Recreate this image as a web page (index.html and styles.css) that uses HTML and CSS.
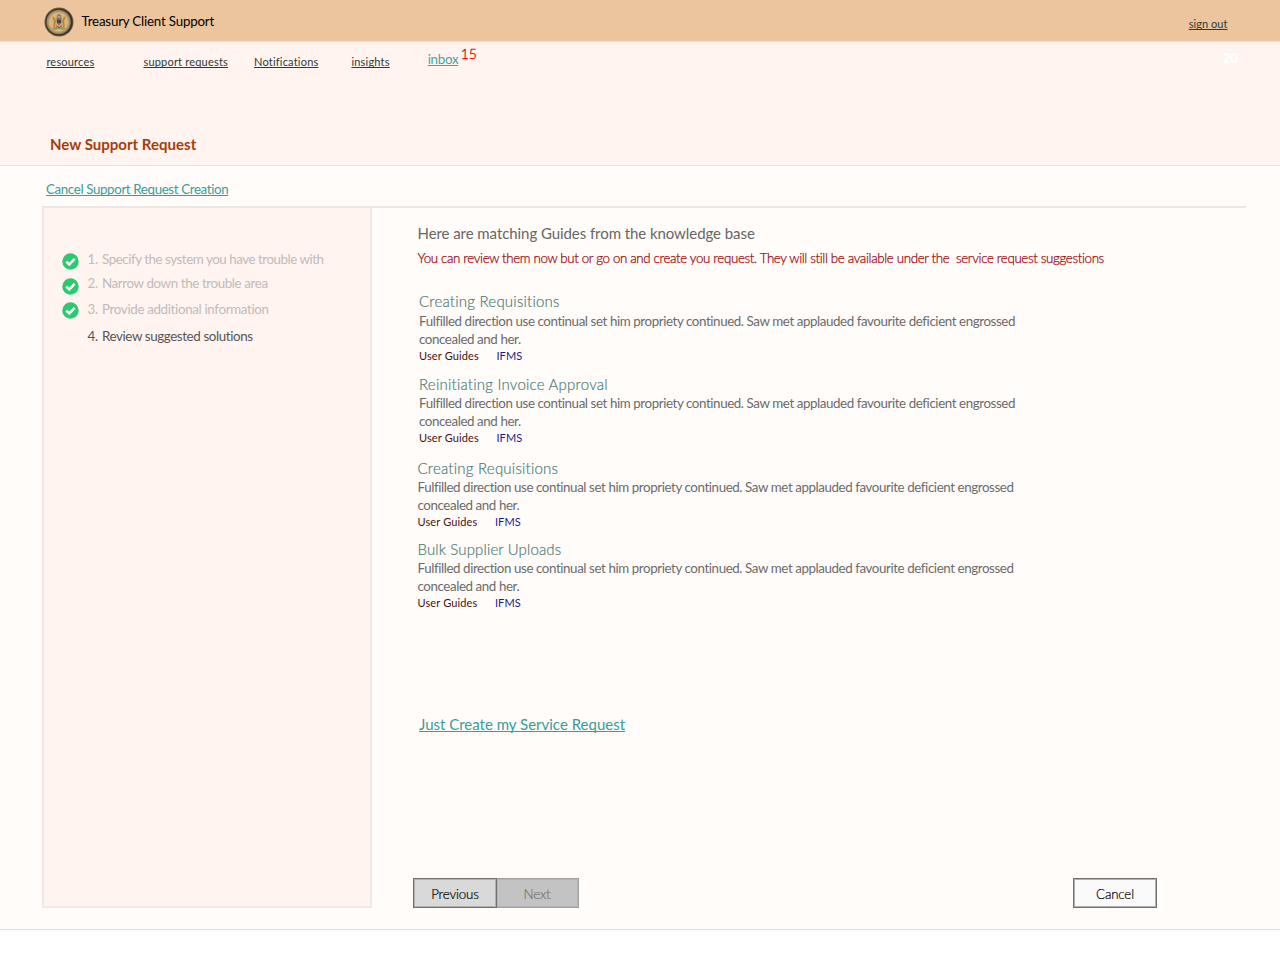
FILE: index.html
```html
<!DOCTYPE html>
<html lang="en">
<head>
<meta charset="utf-8">
<title>Treasury Client Support</title>
<link rel="stylesheet" href="styles.css">
</head>
<body>
<header class="topbar">
  <div class="brand">
    <svg class="seal" viewBox="0 0 30 30" width="30" height="30">
      <defs><radialGradient id="gold"><stop offset="0" stop-color="#c99e62"/><stop offset=".7" stop-color="#e0b87c"/><stop offset="1" stop-color="#8b7552"/></radialGradient></defs>
      <circle cx="15" cy="15" r="14.5" fill="#6b5d4e"/>
      <circle cx="15" cy="15" r="13.6" fill="#35302b"/>
      <circle cx="14.6" cy="15" r="12.2" fill="url(#gold)"/>
      <path d="M9 10l2 4-1 6M21 10l-2 4 1 6" stroke="#b98446" stroke-width="1.8" fill="none"/>
      <path d="M12.5 10.5h5l-.3 5.5-2.2 2.5-2.2-2.5z" fill="#8a6e55"/>
      <path d="M13 13h4v3h-4z" fill="#3d4558"/>
      <path d="M13 9.5l2-2 2 2" stroke="#6a7d83" stroke-width="1.4" fill="none"/>
      <path d="M8 21q7-3 14 0l-2 2q-5-2-10 0z" fill="#8b9b61"/>
      <path d="M12 18.5l3 2 3-2" stroke="#bd4936" fill="none"/>
    </svg>
    <span class="brand-name">Treasury Client Support</span>
  </div>
  <a class="signout">sign out</a>
</header>
<nav class="nav">
  <a class="n1">resources</a><a class="n2">support requests</a><a class="n3">Notifications</a><a class="n4">insights</a><a class="inbox">inbox</a><span class="count">15</span><span class="ghost">20</span>
</nav>
<div class="titlebar"><h1>New Support Request</h1></div>
<main class="page">
  <div class="cancel-row"><a class="cancel-link">Cancel Support Request Creation</a></div>
  <div class="columns">
    <aside class="steps">
      <ol>
        <li class="s1"><svg viewBox="0 0 18 18"><circle cx="9" cy="9" r="8.7"/><path d="M4.6 9.1l3.1 3 5.7-5.8"/></svg><b>1.</b><span>Specify the system you have trouble with</span></li>
        <li class="s2"><svg viewBox="0 0 18 18"><circle cx="9" cy="9" r="8.7"/><path d="M4.6 9.1l3.1 3 5.7-5.8"/></svg><b>2.</b><span>Narrow down the trouble area</span></li>
        <li class="s3"><svg viewBox="0 0 18 18"><circle cx="9" cy="9" r="8.7"/><path d="M4.6 9.1l3.1 3 5.7-5.8"/></svg><b>3.</b><span>Provide additional information</span></li>
        <li class="s4 current"><i></i><b>4.</b><span>Review suggested solutions</span></li>
      </ol>
    </aside>
    <section class="content">
      <h2>Here are matching Guides from the knowledge base</h2>
      <p class="note">You can review them now but or go on and create you request. They will still be available under the&nbsp; service request suggestions</p>
      <article class="guide g1"><h3>Creating Requisitions</h3><p>Fulfilled direction use continual set him propriety continued. Saw met applauded favourite deficient engrossed<br>concealed and her.</p><div class="tags"><span>User Guides</span><span class="ifms">IFMS</span></div></article>
      <article class="guide g2"><h3>Reinitiating Invoice Approval</h3><p>Fulfilled direction use continual set him propriety continued. Saw met applauded favourite deficient engrossed<br>concealed and her.</p><div class="tags"><span>User Guides</span><span class="ifms">IFMS</span></div></article>
      <article class="guide g3"><h3>Creating Requisitions</h3><p>Fulfilled direction use continual set him propriety continued. Saw met applauded favourite deficient engrossed<br>concealed and her.</p><div class="tags"><span>User Guides</span><span class="ifms">IFMS</span></div></article>
      <article class="guide g4"><h3>Bulk Supplier Uploads</h3><p>Fulfilled direction use continual set him propriety continued. Saw met applauded favourite deficient engrossed<br>concealed and her.</p><div class="tags"><span>User Guides</span><span class="ifms">IFMS</span></div></article>
      <a class="create">Just Create my Service Request</a>
      <div class="actions">
        <button class="prev">Previous</button><button class="next" disabled>Next</button><button class="cancel">Cancel</button>
      </div>
    </section>
  </div>
</main>
</body>
</html>
```
FILE: styles.css
```css
* { box-sizing: border-box; }
body { margin: 0; width: 1280px; height: 960px; overflow: hidden; background: #fff; font-family: Lato, "Liberation Sans", sans-serif; color: #666; white-space: nowrap; }
h1, h2, h3, p, ol { margin: 0; padding: 0; }
a { text-decoration: underline; text-underline-offset: 1px; text-decoration-thickness: 1px; text-decoration-skip-ink: none; }

.topbar { display: flex; justify-content: space-between; height: 42px; padding: 0 52.5px 0 44px; background: #ecc59e; border-bottom: 1px solid #f2ddca; }
.brand { display: flex; align-items: flex-start; gap: 7.5px; padding-top: 7px; }
.seal { display: block; }
.brand-name { margin-top: 4px; font-size: 13.33px; line-height: 20px; color: #000; letter-spacing: -.2px; }
.signout { margin-top: 14px; font-size: 11px; line-height: 20px; color: #2b3b36; letter-spacing: .05px; }

.nav { display: flex; height: 83px; padding: 0 42px 0 46.4px; background: #fff4f0; font-size: 11px; line-height: 20px; color: #2b3b36; }
.nav a { margin: 10px auto 0 0; letter-spacing: .2px; }
.nav .n1 { margin-right: 49px; }
.nav .n2 { margin-right: 26px; }
.nav .n3 { margin-right: 33px; }
.nav .n4 { margin-right: 38px; }
.nav .inbox { margin: 7px 2.5px 0 0; font-size: 13.33px; letter-spacing: -.3px; color: #46a39f; }
.count { margin-top: 2px; font-size: 14px; font-weight: 300; color: #f00; -webkit-text-stroke: .35px #f00; }
.ghost { margin: 6px 0 0 auto; font-size: 13.33px; font-weight: 900; color: #fff; }

.titlebar { height: 41px; padding: 9px 0 0 50px; background: #fff4f0; border-bottom: 1px solid #eadcdb; }
h1 { font-size: 15px; line-height: 20px; font-weight: 700; color: #a63c0c; letter-spacing: .02px; }

.page { height: 764px; padding: 0 34px 0 42px; background: #fffcf9; border-bottom: 1px solid #eadcdb; }
.cancel-row { height: 40px; padding: 12px 0 0 4px; }
.cancel-link { display: block; width: max-content; font-size: 13.33px; line-height: 22px; letter-spacing: -.37px; color: #389d99; }
.columns { display: flex; height: 702px; border-top: 2px solid #ebe5e3; }
.steps { width: 330px; height: 700px; padding: 41px 0 0 18px; background: #fff4f0; border: 2px solid #f3e7e4; border-top: 0; }
.steps ol { list-style: none; }
.steps li { display: flex; font-size: 13.33px; line-height: 20px; color: #bfbbb9; height: 24px; letter-spacing: -.38px; }
.steps .s1 { letter-spacing: -.45px; }
.steps .s2 { height: 26px; }
.steps .s3 { height: 27px; letter-spacing: -.33px; }
.steps svg, .steps i { width: 17px; height: 17px; margin: 4px 8.5px 0 0; }
.steps .s2 svg { margin-top: 5px; }
.steps .s3 svg { margin-top: 3px; }
.steps circle { fill: #2cc971; }
.steps path { fill: none; stroke: #fff; stroke-width: 2.7; }
.steps b { width: 14.5px; font-weight: 400; letter-spacing: -.2px; }
.steps .current { color: #555; }

.content { flex: 1; padding: 15px 89px 0 45.5px; }
h2 { font-size: 15px; line-height: 20px; font-weight: 400; color: #666; letter-spacing: -.065px; }
.note { margin-top: 5px; font-size: 13.33px; line-height: 20px; color: #a00a10; font-weight: 300; letter-spacing: -.352px; -webkit-text-stroke: .25px #a00a10; }
.guide { padding-left: 1.5px; }
.g3, .g4 { padding-left: 0; }
.g1 { margin-top: 23px; }
.g1 p { margin-top: 1px; }
.g2 { margin-top: 10px; }
.g3 { margin-top: 12px; }
.g4 { margin-top: 9px; }
h3 { font-size: 15px; line-height: 20px; font-weight: 300; color: #4e7d78; letter-spacing: .23px; -webkit-text-stroke: .2px #4e7d78; }
.g4 h3 { letter-spacing: .14px; }
.guide p { font-size: 13.33px; line-height: 18px; color: #6b6b6b; letter-spacing: -.41px; }
.tags { display: flex; gap: 17.5px; font-size: 11px; line-height: 16px; color: #4a1010; letter-spacing: .13px; }
.ifms { color: #1c1c8c; }
.create { display: block; width: max-content; margin: 103px 0 0 1.5px; font-size: 15px; line-height: 20px; color: #389d99; }
.actions { display: flex; margin: 144px 0 0 -4.5px; }
button { width: 84px; height: 30px; padding: 2px 0 0; font: 300 13.33px/20px Lato, sans-serif; letter-spacing: -.15px; border: 1px solid #707070; box-shadow: inset 0 0 0 1px #b0b0b0; background: #fafafa; color: #000; -webkit-text-stroke: .2px; }
.prev { background: #d9d9d9; position: relative; }
.next { width: 83px; margin-left: -1px; padding-right: 1px; background: #c3c3c3; border-color: #a0a0a0; box-shadow: inset 0 0 0 1px #b5b5b5; color: #777; }
.cancel { margin-left: auto; }
```
